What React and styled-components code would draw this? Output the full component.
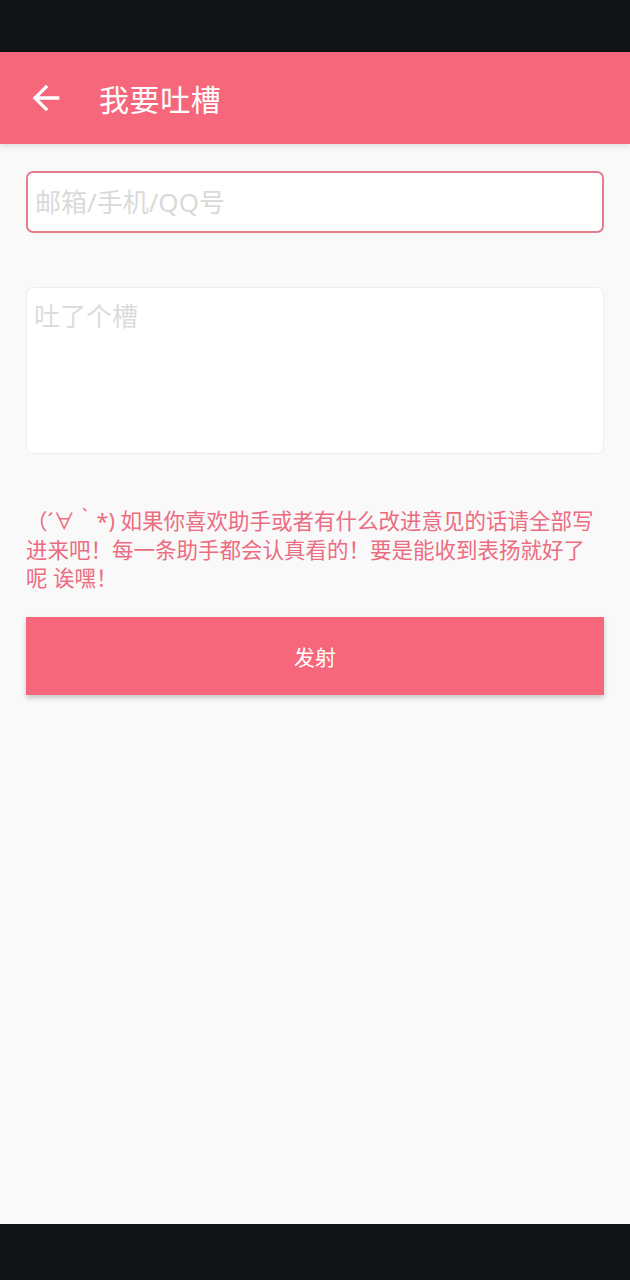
import styled, { createGlobalStyle } from "styled-components";

const GlobalStyle = createGlobalStyle`
  html, body {
    margin: 0;
    padding: 0;
    background: #f9f9f9;
  }
  * {
    box-sizing: border-box;
  }
`;

const PINK = "#f7677b";
const FONT = `"Noto Sans", "Noto Sans CJK SC", sans-serif`;

const Page = styled.div`
  display: flex;
  flex-direction: column;
  height: 1280px;
  font-family: ${FONT};
  background: #f9f9f9;
`;

const SystemBar = styled.div`
  height: ${(p) => p.h}px;
  flex-shrink: 0;
  background: #111317;
`;

const Header = styled.header`
  height: 92px;
  flex-shrink: 0;
  display: flex;
  align-items: center;
  padding-left: 26px;
  background: ${PINK};
  box-shadow: 0 2px 6px rgba(0, 0, 0, 0.12);
  position: relative;
  z-index: 1;
`;

const BackButton = styled.button`
  display: flex;
  align-items: center;
  justify-content: center;
  width: 40px;
  height: 40px;
  padding: 0;
  border: none;
  background: transparent;
  color: #fff;
  cursor: pointer;
`;

const Title = styled.h1`
  margin: 0 0 0 33px;
  font-size: 30px;
  font-weight: 400;
  color: #fff;
  letter-spacing: 0.6px;
`;

const Content = styled.main`
  flex: 1;
  display: flex;
  flex-direction: column;
  padding: 27px 26px 0;
`;

const Field = styled.input`
  height: 62px;
  width: 100%;
  padding: 0 7px;
  border: 2px solid #e27d8e;
  border-radius: 7px;
  background: #fff;
  font-family: ${FONT};
  font-size: 26px;
  color: #333;
  outline: none;

  &::placeholder {
    color: #dadada;
  }
`;

const Area = styled.textarea`
  margin-top: 54px;
  height: 167px;
  width: 100%;
  padding: 11px 7px;
  border: 1.5px solid #ececec;
  border-radius: 7px;
  background: #fff;
  font-family: ${FONT};
  font-size: 26px;
  line-height: 1.35;
  color: #333;
  resize: none;
  outline: none;

  &::placeholder {
    color: #dcdcdc;
  }
`;

const Hint = styled.p`
  margin: 53px 0 0;
  font-size: 21.5px;
  line-height: 28.5px;
  color: #ec6c81;
`;

const SubmitButton = styled.button`
  margin-top: 24px;
  height: 78px;
  width: 100%;
  border: none;
  border-radius: 0;
  background: ${PINK};
  color: #fff;
  font-family: ${FONT};
  font-size: 21px;
  box-shadow: 0 3px 5px rgba(0, 0, 0, 0.2);
  cursor: pointer;
`;

const ArrowBack = () => (
  <svg width="40" height="40" viewBox="0 0 24 24" fill="currentColor">
    <path d="M20 11H7.83l5.59-5.59L12 4l-8 8 8 8 1.41-1.41L7.83 13H20v-2z" />
  </svg>
);

export default function App() {
  return (
    <Page>
      <GlobalStyle />
      <SystemBar h={52} />
      <Header>
        <BackButton aria-label="返回">
          <ArrowBack />
        </BackButton>
        <Title>我要吐槽</Title>
      </Header>
      <Content>
        <Field placeholder="邮箱/手机/QQ号" />
        <Area placeholder="吐了个槽" />
        <Hint>
          （´∀｀*) 如果你喜欢助手或者有什么改进意见的话请全部写进来吧！每一条助手都会认真看的！要是能收到表扬就好了呢 诶嘿！
        </Hint>
        <SubmitButton>发射</SubmitButton>
      </Content>
      <SystemBar h={56} />
    </Page>
  );
}
